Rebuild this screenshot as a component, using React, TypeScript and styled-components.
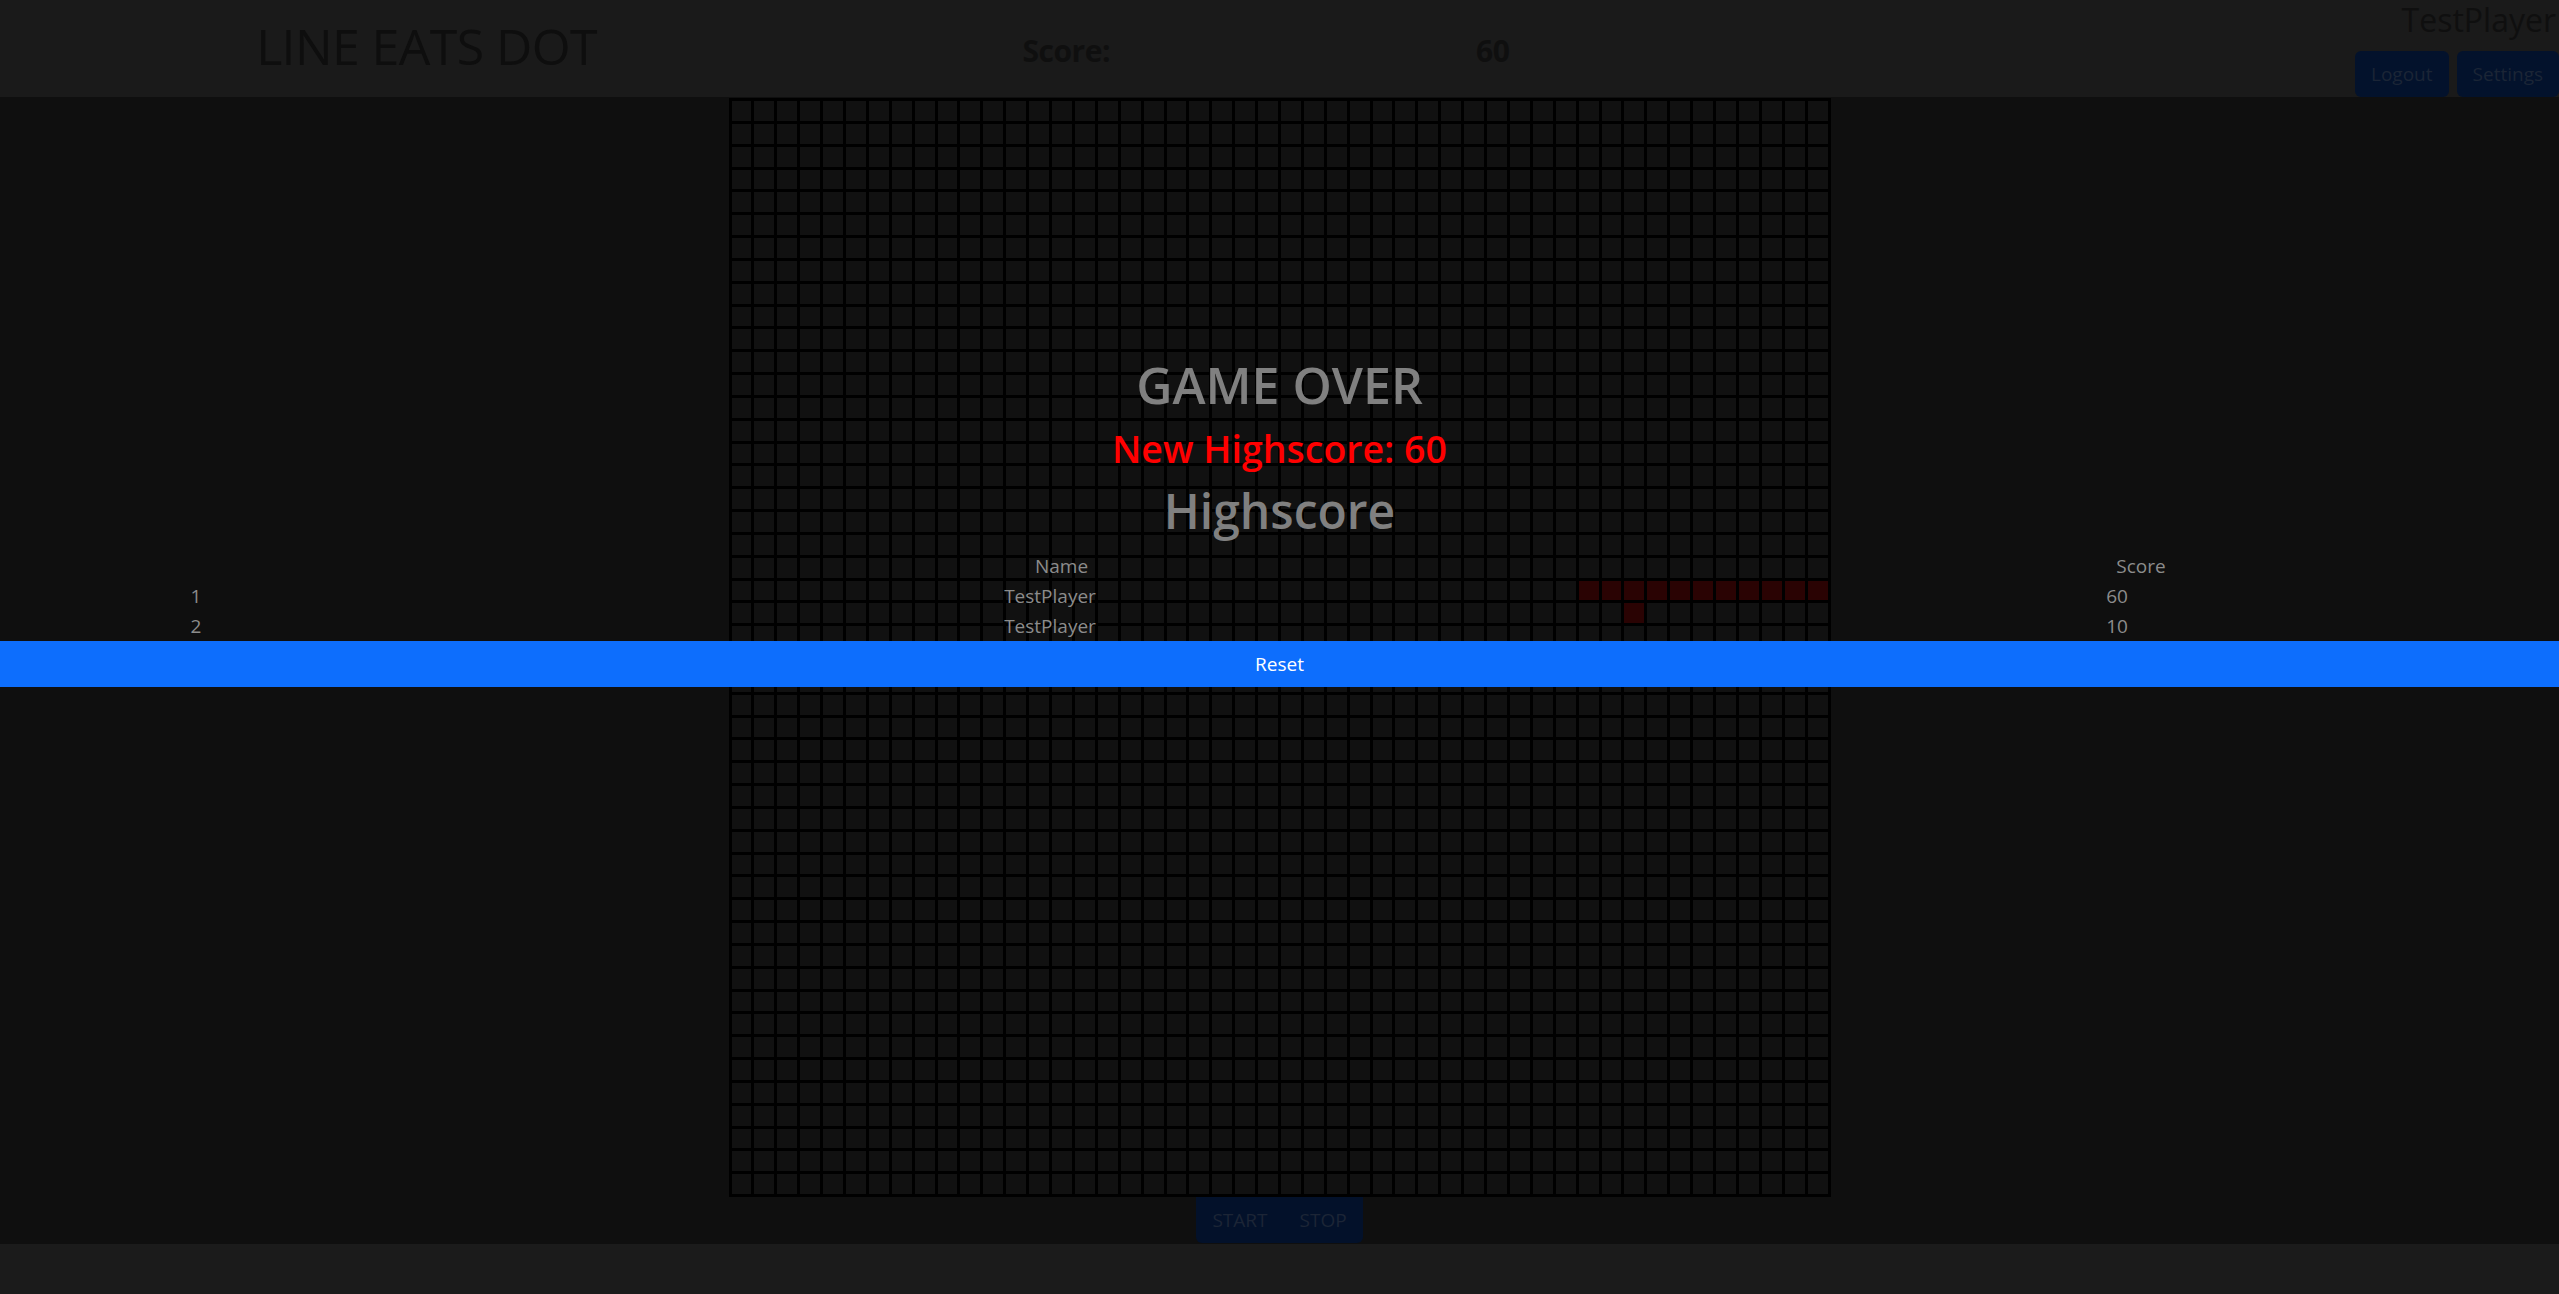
import React from "react";
import styled, { createGlobalStyle } from "styled-components";

const GlobalStyle = createGlobalStyle`
  html, body {
    margin: 0;
    padding: 0;
    background: #0f0f0f;
    overflow: hidden;
  }
  body {
    font-family: "Open Sans", "Noto Sans", Arial, sans-serif;
  }
  *, *::before, *::after {
    box-sizing: border-box;
  }
`;

const Page = styled.div`
  position: relative;
  display: flex;
  flex-direction: column;
  width: 100vw;
  height: 100vh;
  overflow: hidden;
`;

const Header = styled.header`
  flex: none;
  height: 97px;
  background: #1a1a1a;
  display: grid;
  grid-template-columns: repeat(3, 1fr);
`;

const TitleCol = styled.div`
  display: flex;
  align-items: center;
  justify-content: center;
  padding-bottom: 6px;
`;

const Title = styled.h1`
  margin: 0;
  font-size: 50px;
  font-weight: 400;
  line-height: 1;
  color: #0e0e0e;
  letter-spacing: -0.6px;
`;

const ScoreCol = styled.div`
  display: grid;
  grid-template-columns: 1fr 1fr;
  align-items: center;
  padding-top: 4px;
`;

const ScoreText = styled.div`
  text-align: center;
  font-size: 30px;
  font-weight: 700;
  color: #0f0f0f;
  letter-spacing: -0.5px;
`;

const UserCol = styled.div`
  display: flex;
  flex-direction: column;
  align-items: flex-end;
  justify-content: space-between;
`;

const UserName = styled.div`
  font-size: 32px;
  line-height: 40px;
  margin-right: 3px;
  color: #0f0f0f;
  white-space: nowrap;
`;

const UserButtons = styled.div`
  display: flex;
  gap: 8px;
`;

const DimButton = styled.button`
  height: 46px;
  padding: 0 16px;
  border: none;
  border-radius: 6px;
  background: #03122c;
  color: #1b2536;
  font-family: inherit;
  font-size: 19px;
  white-space: nowrap;
`;

const Main = styled.main`
  flex: 1;
  display: flex;
  flex-direction: column;
  align-items: center;
  background: #0f0f0f;
  padding-top: 1px;
`;

const Board = styled.div`
  width: 1102px;
  height: 1099px;
  display: grid;
  grid-template-columns: repeat(48, 1fr);
  grid-template-rows: repeat(48, 1fr);
  gap: 3px;
  padding: 3px;
  background: #000;
`;

const Cell = styled.div<{ $lit: boolean }>`
  background: ${(p) => (p.$lit ? "#2a0303" : "#111111")};
`;

const Controls = styled.div`
  display: flex;
  height: 46px;
`;

const ControlButton = styled.button<{ $side: "left" | "right" }>`
  height: 46px;
  padding: 0 16px;
  border: none;
  background: #03112a;
  color: #1c2536;
  font-family: inherit;
  font-size: 19px;
  border-radius: ${(p) => (p.$side === "left" ? "0 0 0 6px" : "0 0 6px 0")};
`;

const Footer = styled.footer`
  flex: none;
  height: 50px;
  background: #1b1b1b;
`;

const Overlay = styled.div`
  position: absolute;
  inset: 0;
  display: flex;
  flex-direction: column;
  align-items: stretch;
  padding-top: 355px;
`;

const BigHeading = styled.h2<{ $size: number }>`
  margin: 0;
  text-align: center;
  font-size: ${(p) => p.$size}px;
  line-height: 60px;
  font-weight: 600;
  color: #808080;
`;

const NewHighscore = styled.h3`
  margin: 12px 0 11px;
  text-align: center;
  font-size: 37.5px;
  line-height: 43px;
  font-weight: 600;
  color: #ff0000;
`;

const Table = styled.div`
  margin-top: 10px;
  display: flex;
  flex-direction: column;
`;

const Row = styled.div<{ $cols: string }>`
  display: grid;
  grid-template-columns: ${(p) => p.$cols};
`;

const TableCell = styled.div`
  text-align: center;
  font-size: 19px;
  line-height: 30px;
  color: #8c8c8c;
`;

const ResetButton = styled.button`
  width: 100%;
  height: 46px;
  border: none;
  background: #0d6efd;
  color: #ffffff;
  font-family: inherit;
  font-size: 19px;
`;

const COLS = 48;
const ROWS = 48;
const snake = new Set<string>();
for (let c = 37; c <= 47; c++) snake.add(`21-${c}`);
snake.add(`22-39`);

const scores = [
  { rank: 1, name: "TestPlayer", score: 60 },
  { rank: 2, name: "TestPlayer", score: 10 },
];

export default function App() {
  const cells = [];
  for (let r = 0; r < ROWS; r++) {
    for (let c = 0; c < COLS; c++) {
      cells.push(<Cell key={`${r}-${c}`} $lit={snake.has(`${r}-${c}`)} />);
    }
  }
  return (
    <>
      <GlobalStyle />
      <Page>
        <Header>
          <TitleCol>
            <Title>LINE EATS DOT</Title>
          </TitleCol>
          <ScoreCol>
            <ScoreText>Score:</ScoreText>
            <ScoreText>60</ScoreText>
          </ScoreCol>
          <UserCol>
            <UserName>TestPlayer</UserName>
            <UserButtons>
              <DimButton>Logout</DimButton>
              <DimButton>Settings</DimButton>
            </UserButtons>
          </UserCol>
        </Header>
        <Main>
          <Board>{cells}</Board>
          <Controls>
            <ControlButton $side="left">START</ControlButton>
            <ControlButton $side="right">STOP</ControlButton>
          </Controls>
        </Main>
        <Footer />
        <Overlay>
          <BigHeading $size={50}>GAME OVER</BigHeading>
          <NewHighscore>New Highscore: 60</NewHighscore>
          <BigHeading $size={48}>Highscore</BigHeading>
          <Table>
            <Row $cols="400px 1323px 1fr">
              <TableCell />
              <TableCell>Name</TableCell>
              <TableCell>Score</TableCell>
            </Row>
            {scores.map((s) => (
              <Row key={s.rank} $cols="392px 1316px 818px">
                <TableCell>{s.rank}</TableCell>
                <TableCell>{s.name}</TableCell>
                <TableCell>{s.score}</TableCell>
              </Row>
            ))}
          </Table>
          <ResetButton>Reset</ResetButton>
        </Overlay>
      </Page>
    </>
  );
}
